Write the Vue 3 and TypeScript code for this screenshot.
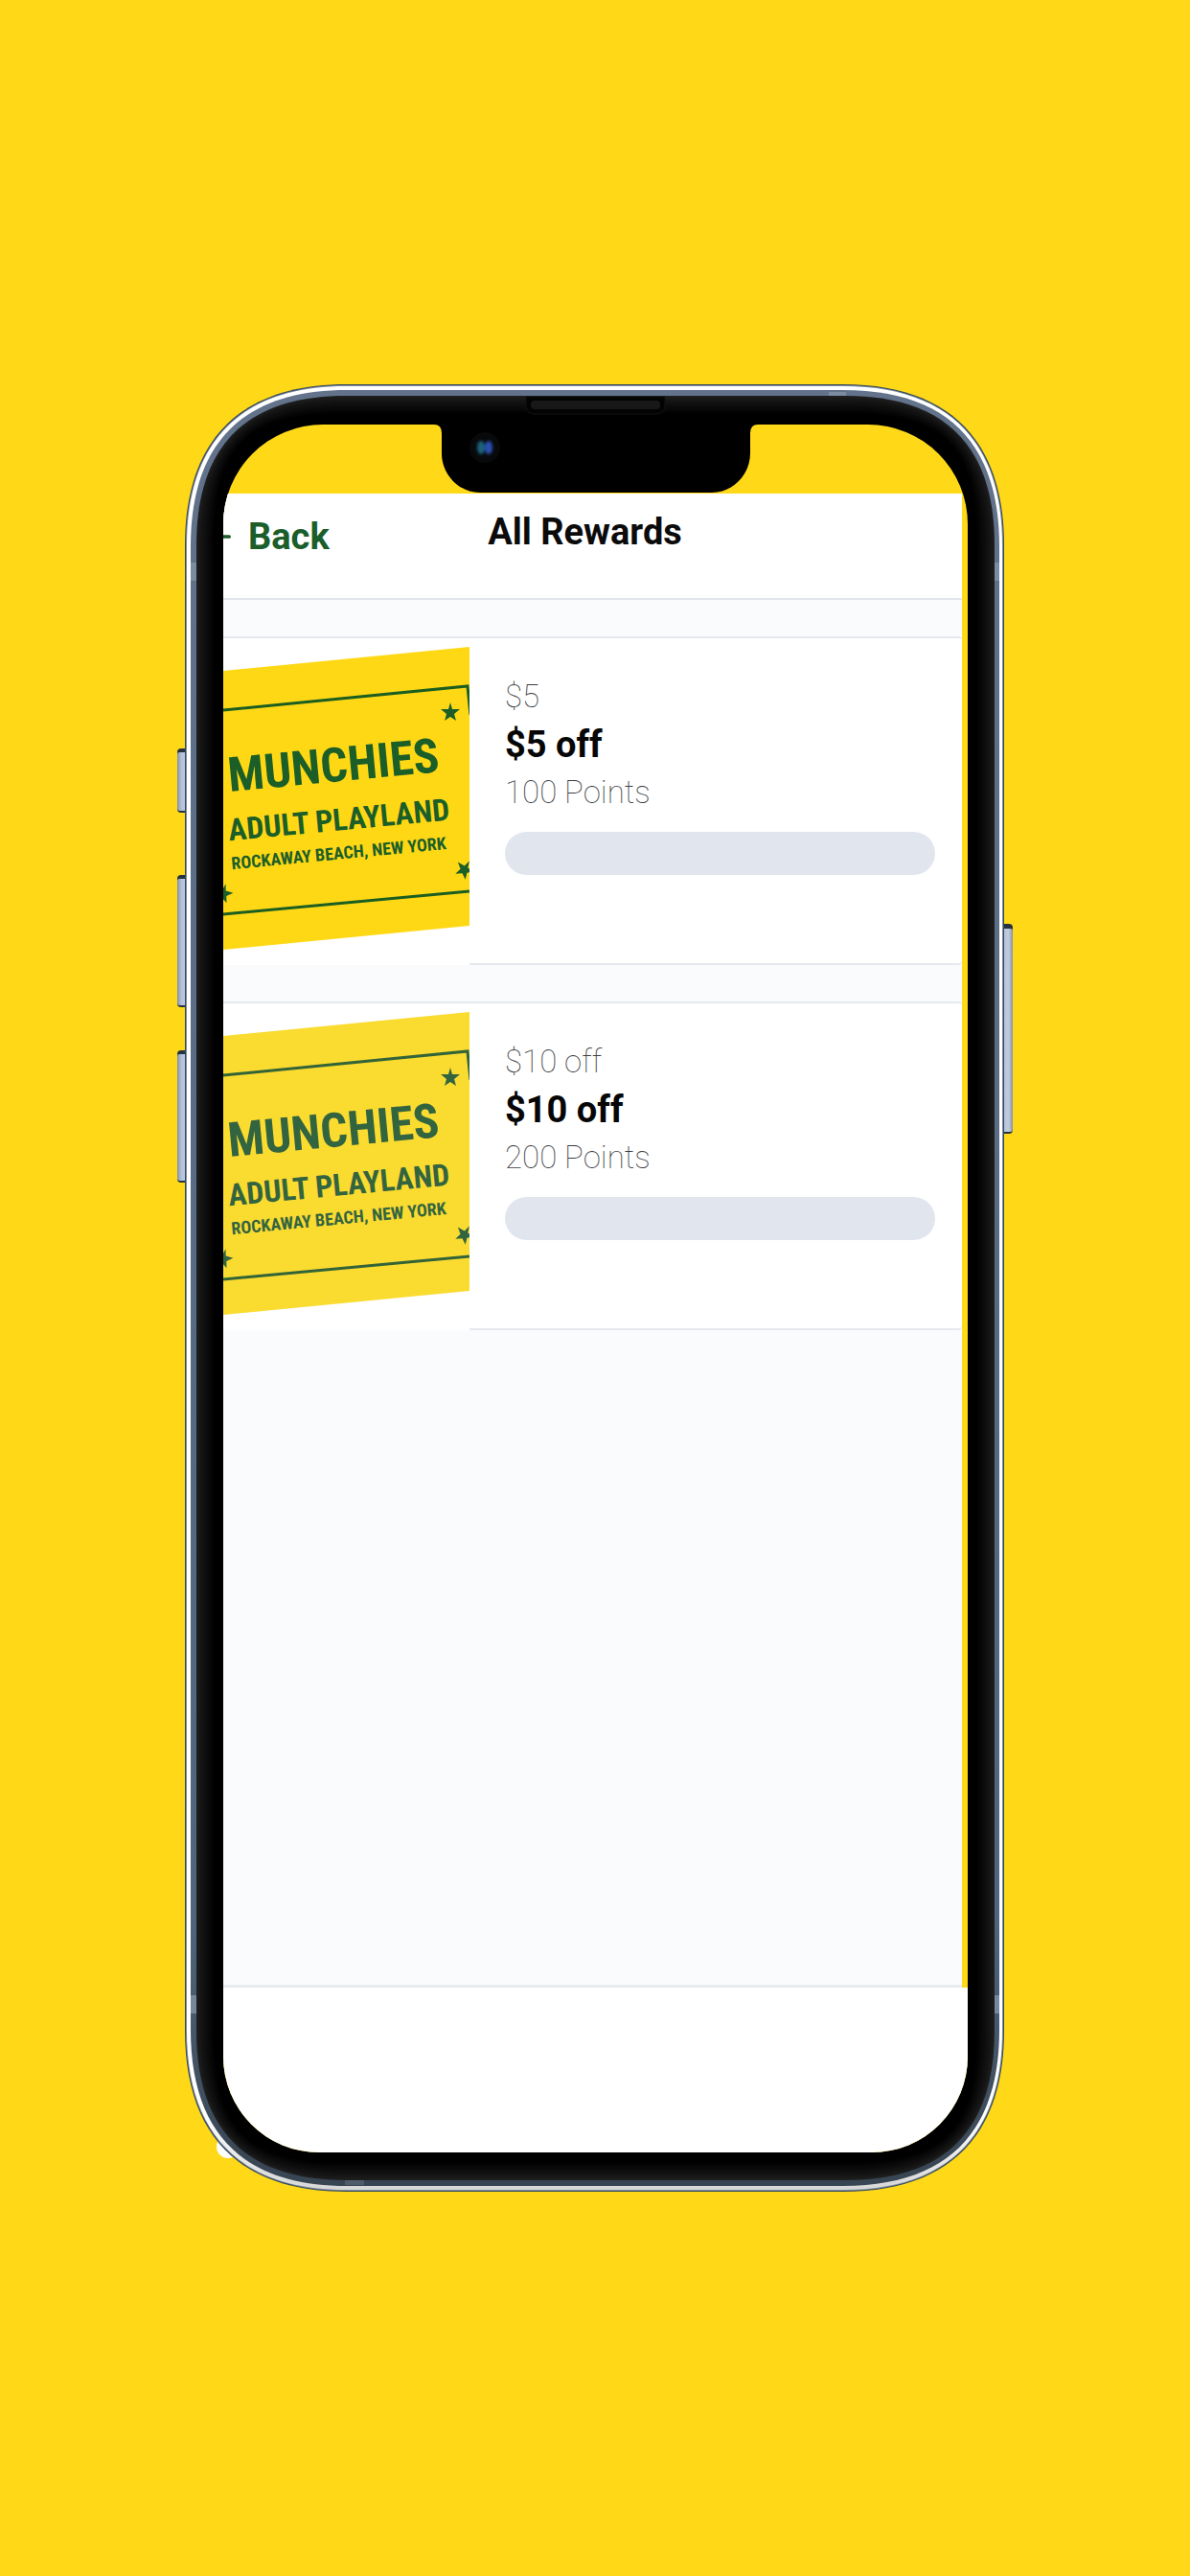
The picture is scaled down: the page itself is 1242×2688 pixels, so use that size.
<script setup lang="ts">
interface Reward {
  id: number
  name: string
  title: string
  points: number
  progress: number
  locked: boolean
}

interface Layer {
  d: string
  fill: string
}

const rewards: Reward[] = [
  { id: 1, name: '$5', title: '$5 off', points: 100, progress: 0, locked: false },
  { id: 2, name: '$10 off', title: '$10 off', points: 200, progress: 0, locked: true },
]

// Rectangle with smooth corners: r is the reach of the curve, c the distance
// of its control points from the corner.
function smoothRect(x1: number, y1: number, x2: number, y2: number, r: number, c: number): string {
  return [
    `M${x1} ${y1 + r}`,
    `C${x1} ${y1 + c} ${x1 + c} ${y1} ${x1 + r} ${y1}`,
    `H${x2 - r}`,
    `C${x2 - c} ${y1} ${x2} ${y1 + c} ${x2} ${y1 + r}`,
    `V${y2 - r}`,
    `C${x2} ${y2 - c} ${x2 - c} ${y2} ${x2 - r} ${y2}`,
    `H${x1 + r}`,
    `C${x1 + c} ${y2} ${x1} ${y2 - c} ${x1} ${y2 - r}`,
    'Z',
  ].join(' ')
}

const layers: Layer[] = [
  { d: smoothRect(8, 0, 863, 1886, 168, 58), fill: '#34495d' },
  { d: smoothRect(9, 1, 862, 1885, 167, 58), fill: '#7d8b9c' },
  { d: smoothRect(10, 2, 861, 1884, 166, 57), fill: 'url(#shine)' },
  { d: smoothRect(14, 6, 858, 1880, 163, 55), fill: 'url(#steel)' },
]

const glow = ['#1d1d1d', '#191919', '#151515', '#121212', '#0f0f0f', '#0c0c0c', '#090909', '#060606', '#030303', '#000000']
glow.forEach((fill, i) => {
  const n = i * 2
  layers.push({ d: smoothRect(20 + n, 12 + n, 853 - n, 1874 - n, 156 - n, 52 - n), fill })
})

const star = 'M0 -10 L2 -3 L10 -3 L4 2 L6 9 L0 5 L-6 9 L-4 2 L-10 -3 L-2 -3 Z'
</script>

<template>
  <main class="page">
    <div class="device">
      <svg class="frame" viewBox="0 0 872 1886" preserveAspectRatio="none" aria-hidden="true">
        <defs>
          <linearGradient id="shine" x1="0" y1="0" x2="0" y2="1">
            <stop offset="0" stop-color="#ffffff" />
            <stop offset="0.96" stop-color="#ffffff" />
            <stop offset="1" stop-color="#d6d6d6" />
          </linearGradient>
          <linearGradient id="steel" x1="0" y1="0" x2="0" y2="1">
            <stop offset="0" stop-color="#62738b" />
            <stop offset="0.85" stop-color="#50657d" />
            <stop offset="1" stop-color="#374451" />
          </linearGradient>
          <linearGradient id="key" x1="0" y1="0" x2="1" y2="0">
            <stop offset="0" stop-color="#8190a8" />
            <stop offset="0.3" stop-color="#b3c2da" />
            <stop offset="0.7" stop-color="#c0cce0" />
            <stop offset="1" stop-color="#8b8fa0" />
          </linearGradient>
        </defs>
        <circle cx="53" cy="1839" r="12" fill="#ffffff" />
        <g fill="#26323f">
          <rect x="0" y="380" width="14" height="67" rx="4" />
          <rect x="0" y="512" width="14" height="138" rx="4" />
          <rect x="0" y="695" width="14" height="138" rx="4" />
          <rect x="858" y="563" width="14" height="219" rx="4" />
        </g>
        <g fill="url(#key)">
          <rect x="0" y="384" width="14" height="61" rx="2" />
          <rect x="0" y="516" width="14" height="132" rx="2" />
          <rect x="0" y="699" width="14" height="132" rx="2" />
          <rect x="858" y="568" width="14" height="212" rx="2" />
        </g>
        <path v-for="(layer, i) in layers" :key="i" :d="layer.d" :fill="layer.fill" />
        <g fill="#8391a5" fill-opacity="0.8">
          <rect x="14" y="186" width="6" height="19" />
          <rect x="14" y="1681" width="6" height="19" />
          <rect x="853" y="186" width="5" height="19" />
          <rect x="853" y="1681" width="5" height="19" />
          <rect x="680" y="8" width="18" height="4" />
          <rect x="175" y="1874" width="20" height="5" fill="#566170" />
        </g>
        <path d="M364 13 V22 Q364 31 374 31 H499 Q509 31 509 22 V13 Z" fill="#030303" stroke="#121212" />
        <rect x="369" y="17" width="135" height="9" rx="4" fill="#181818" />
      </svg>

      <div class="screen">
        <svg class="notch" viewBox="0 0 338 72" aria-hidden="true">
          <defs>
            <filter id="soft" x="-50%" y="-50%" width="200%" height="200%">
              <feGaussianBlur stdDeviation="1.5" />
            </filter>
          </defs>
          <path d="M0 0 Q8 0 8 9 V30 C8 52 26 71 48 71 H290 C312 71 330 52 330 30 V9 Q330 0 338 0 Z" fill="#000000" />
          <circle cx="53" cy="24" r="16" fill="#08090b" />
          <g filter="url(#soft)">
            <ellipse cx="49" cy="24" rx="4" ry="7" fill="#1c627c" />
            <ellipse cx="57" cy="24" rx="4" ry="7" fill="#2b4fb4" />
          </g>
        </svg>

        <div class="app">
          <header class="header">
            <button class="back" type="button">
              <svg class="arrow" viewBox="0 0 26 26" aria-hidden="true">
                <path d="M24 13 H2 M12 3 L2 13 L12 23" />
              </svg>
              <span>Back</span>
            </button>
            <h1 class="title">All Rewards</h1>
          </header>

          <section class="list">
            <article v-for="reward in rewards" :key="reward.id" class="card">
              <div class="picture">
                <svg class="ticket" :class="{ locked: reward.locked }" viewBox="0 0 257 341">
                  <path class="paper" d="M0 34 L257 9 V300 L0 325 Z" />
                  <path class="rule" d="M0 75 L255 50 L258 80 M0 288 L257 264" />
                  <g class="ink">
                    <path :d="star" transform="translate(237 77)" />
                    <path :d="star" transform="translate(252 241) rotate(30)" />
                    <path :d="star" transform="translate(0 266) rotate(15)" />
                    <g transform="rotate(-5.4 7 166)" class="lettering">
                      <text class="brand" x="7" y="160">MUNCHIES</text>
                      <text class="place" x="2" y="211">ADULT PLAYLAND</text>
                      <text class="town" x="2" y="241">ROCKAWAY BEACH, NEW YORK</text>
                    </g>
                  </g>
                </svg>
              </div>
              <div class="details">
                <p class="light">{{ reward.name }}</p>
                <h2 class="name">{{ reward.title }}</h2>
                <p class="light">{{ reward.points }} Points</p>
                <div class="bar" role="progressbar" :aria-valuenow="reward.progress" aria-valuemin="0" :aria-valuemax="reward.points">
                  <div class="fill" :style="{ width: reward.progress + '%' }"></div>
                </div>
              </div>
            </article>
          </section>
        </div>
        <footer class="footer"></footer>
      </div>
    </div>
  </main>
</template>

<style>
body {
  margin: 0;
  background: #ffd818;
}
</style>

<style scoped>
.page {
  box-sizing: border-box;
  min-height: 100vh;
  display: flex;
  align-items: center;
  justify-content: center;
  background: #ffd818;
  font-family: Roboto, 'Liberation Sans', sans-serif;
}

.device {
  position: relative;
  box-sizing: border-box;
  width: 100%;
  max-width: 872px;
  padding: 42px 47px 41px 48px;
}

.frame {
  position: absolute;
  inset: 0;
  width: 100%;
  height: 100%;
}

.screen {
  position: relative;
  display: flex;
  flex-direction: column;
  min-height: 1803px;
  padding-top: 72px;
  box-sizing: border-box;
  overflow: hidden;
  border-radius: 104px 104px 100px 100px;
  background: #ffd818;
}

.notch {
  position: absolute;
  top: 0;
  left: 50%;
  width: 338px;
  height: 72px;
  transform: translateX(-50%);
}

.app {
  flex: 1;
  display: flex;
  flex-direction: column;
  margin: 0 6px 0 -16px;
  background: #fafbfd;
  border-bottom: 3px solid #e9eaee;
}

.header {
  display: grid;
  grid-template-columns: 1fr auto 1fr;
  height: 109px;
  background: #ffffff;
  border-bottom: 2px solid #e4e6ed;
}

.back {
  display: flex;
  align-items: center;
  justify-self: start;
  gap: 18px;
  height: 44px;
  margin: 23px 0 0;
  padding: 0;
  border: 0;
  background: none;
  color: #1b5e2b;
  font: 700 38px/44px Roboto, 'Liberation Sans', sans-serif;
}

.arrow {
  width: 24px;
  height: 26px;
  fill: none;
  stroke: currentColor;
  stroke-width: 4;
  stroke-linecap: round;
}

.title {
  margin: 18px 0 0;
  color: #0b0b0c;
  font-size: 38px;
  font-weight: 700;
  line-height: 44px;
}

.list {
  display: flex;
  flex-direction: column;
  gap: 38px;
  padding-top: 38px;
}

.card {
  display: flex;
  align-items: stretch;
  background: #ffffff;
  border: solid #e5e8ee;
  border-width: 2px 0;
  border-radius: 4px;
}

.picture {
  flex: none;
  width: 257px;
  margin: 0 0 -2px 16px;
  background: #ffffff;
}

.ticket {
  display: block;
  width: 257px;
  height: 341px;
}

.paper {
  fill: #ffd815;
}

.rule {
  fill: none;
  stroke: #1b5e20;
  stroke-width: 3;
}

.ink {
  fill: #1b5e28;
}

.locked .paper {
  fill: #fadb30;
}

.locked .rule {
  stroke: #336437;
}

.locked .ink {
  fill: #336440;
}

.lettering {
  font-family: 'Roboto Condensed', 'Liberation Sans Narrow', sans-serif;
  font-weight: 700;
}

.brand {
  font-size: 50px;
}

.place {
  font-size: 32px;
}

.town {
  font-size: 18px;
}

.details {
  flex: 1;
  min-width: 0;
  padding: 36px 28px 0 37px;
}

.light,
.name {
  margin: 0;
  line-height: 50px;
}

.light {
  color: #3c3d42;
  font-size: 33px;
  font-weight: 100;
}

.name {
  color: #060606;
  font-size: 38px;
  font-weight: 700;
}

.bar {
  height: 45px;
  margin-top: 16px;
  overflow: hidden;
  border-radius: 23px;
  background: #e1e5ed;
}

.fill {
  height: 100%;
  background: #1b5e2b;
}

.footer {
  height: 172px;
  background: #ffffff;
}
</style>
